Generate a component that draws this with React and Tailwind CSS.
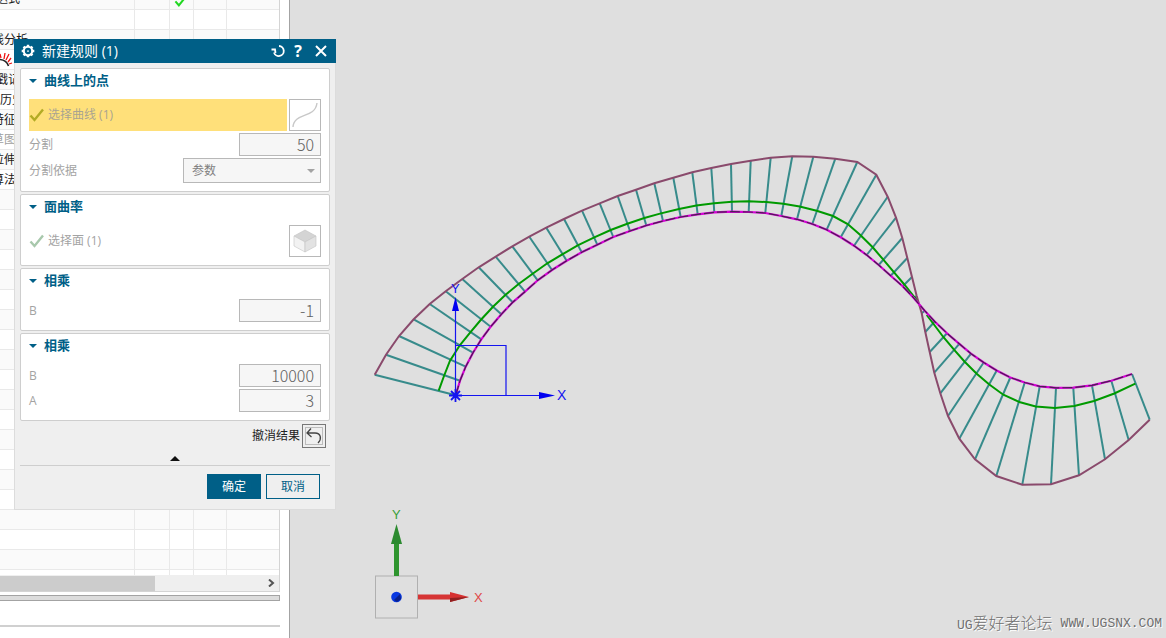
import React, { useState } from 'react';

// each rib: [x on curve, y on curve, x on comb edge, y on comb edge]
const RIBS = [
  [455.7, 395.3, 374.7, 374.7], [460, 380.7, 386, 354.7], [465.7, 366.7, 399, 336], [473, 352.7, 413.7, 319.3],
  [481.3, 339.3, 429.7, 304], [490.7, 326.7, 445.7, 291.3], [501.3, 314.3, 462.3, 279], [512.7, 302.3, 478.7, 267.3],
  [525, 291.7, 495.7, 256.7], [537.7, 280.3, 512.3, 246.3], [552, 270, 529.3, 236.7], [566.7, 260.7, 546.3, 227.7],
  [581.7, 252.3, 564, 219], [597.3, 244.7, 582, 210.7], [613.3, 237, 599.7, 203.3], [630, 231, 617.7, 196],
  [646.3, 225.5, 636, 189.7], [663, 221, 654.3, 183.3], [680.7, 217, 673.3, 177.7], [697.7, 214.3, 692.3, 172.3],
  [714.3, 212.3, 711.3, 168], [732, 211.7, 731, 164], [748.7, 212, 750.7, 160.7], [765.3, 213, 770.7, 157.7],
  [781.3, 216, 792.3, 156.3], [797, 219.3, 813.3, 156.7], [812.3, 224, 835.3, 158.7], [826.7, 229.7, 857.3, 162],
  [840.7, 237.3, 876.3, 174.7], [854, 245.7, 887.7, 196.7], [866.7, 255, 896, 217.7], [878.7, 265, 902.3, 238],
  [890.7, 275.7, 907.3, 258], [902.7, 286.3, 912, 277], [914, 298.3, 916.7, 296], [924.7, 310.7, 921.7, 313.3],
  [934.7, 321.5, 925.3, 332], [947, 333.3, 929.7, 352], [959.3, 343.8, 934.3, 372.7], [971, 353.7, 940.3, 393.3],
  [983.7, 362.5, 948, 416], [996.7, 370.5, 959.3, 438.7], [1010.3, 377.5, 975, 459.3], [1024.7, 382.5, 996.3, 476],
  [1039.7, 386.3, 1022.3, 484.7], [1056, 387.8, 1051, 484.3], [1073.3, 387.7, 1079, 475.3], [1092, 385.3, 1105, 459.3],
  [1111.3, 380.7, 1128.7, 440], [1132, 374, 1149.7, 419.7],
];

const OFFSET_LEFT =
  '438.7,390.7 444,376 450,360.7 460,345 470.3,332.3 480.7,320 493,306.7 505.3,295 518.3,284.3 532.3,274 547.3,263.3 562.3,254.3 577.7,245.3 594.3,237.3 610.7,230 627.3,223.7 644.3,218 660,213.6 679,209 696.3,205.5 714.3,203.3 732,201.8 748.7,201.3 766.3,202 783.3,203.7 799.7,206.5 816.7,210.7 833,216 847.7,224 860.3,235 872.7,247.3 883.3,259.7 894.3,272.7 904.3,284.5 916.7,300';
const OFFSET_RIGHT =
  '926.7,315 934.7,325.5 943.3,337 954,349.7 964.7,361.7 976.7,373.7 989,384.3 1003.3,394.7 1019.3,402 1035.7,406.5 1055,408 1074.3,406 1094,401 1114.3,393.5 1135.3,383.7';

const TREE_ROWS = [
  { label: '达式', left: '-ml-1', checked: true },
  { label: '' },
  { label: '线分析', left: '-ml-2' },
  { label: '', comb: true },
  { label: '戳记', left: '-ml-1' },
  { label: '历史', left: '' },
  { label: '特征', left: '-ml-2' },
  { label: '草图', left: '-ml-2', muted: true },
  { label: '拉伸', left: '-ml-2' },
  { label: '算法', left: '-ml-2' },
  ...Array.from({ length: 20 }, () => ({ label: '' })),
];

function CheckIcon({ className }) {
  return (
    <svg viewBox="0 0 16 14" className={className} fill="none" stroke="currentColor" strokeWidth="2.4">
      <path d="M1.5 7.5 L5.5 12 L14 1.5" />
    </svg>
  );
}

function TreePanel() {
  return (
    <aside className="w-[290px] shrink-0 overflow-hidden border-r border-[#a3a3a3] bg-white text-xs text-[#1c1c1c]">
      <div className="w-[280px]">
        <div className="h-[575px] overflow-hidden border-r border-[#d4d4d4]">
          <table className="-mt-[11px] w-full table-fixed border-collapse">
            <colgroup>
              <col className="w-[134px]" />
              <col className="w-[35px]" />
              <col className="w-[24px]" />
              <col className="w-[33px]" />
              <col />
            </colgroup>
            <tbody>
              {TREE_ROWS.map((row, i) => (
                <tr key={i} className="h-5 border-b border-[#e9e9e9] odd:bg-[#fafafa]">
                  <td className="h-5 border-r border-[#e9e9e9] p-0 leading-[19px] whitespace-nowrap">
                    <span className={`block ${row.left || ''} ${row.muted ? 'text-[#a0a0a0]' : ''}`}>{row.label}</span>
                    {row.comb && (
                      <svg viewBox="0 0 14 16" className="block h-4 w-3.5" fill="none">
                        <path d="M0 8.5 Q6.5 9 8.5 15" stroke="#222" strokeWidth="1.6" />
                        <path d="M1 7 L0 3 M4 8 L5 2 M6 9 L9 3 M8 11 L11 7 M9 13 L12 12" stroke="#e11" strokeWidth="1.3" />
                      </svg>
                    )}
                  </td>
                  <td className="border-r border-[#e9e9e9] p-0" />
                  <td className="border-r border-[#e9e9e9] p-0">
                    {row.checked && <CheckIcon className="mx-auto mt-1 h-3 w-3.5 text-[#22d822]" />}
                  </td>
                  <td className="border-r border-[#e9e9e9] p-0" />
                  <td className="p-0" />
                </tr>
              ))}
            </tbody>
          </table>
        </div>
        <div className="flex h-[17px] items-center justify-between border-r border-b border-[#d4d4d4] bg-[#efefef]">
          <div className="h-[15px] w-[155px] bg-[#cccccc]" />
          <svg viewBox="0 0 8 8" className="mr-1 h-2 w-2" fill="none" stroke="#555" strokeWidth="2">
            <path d="M2 0.5 L6 4 L2 7.5" />
          </svg>
        </div>
        <div className="mt-[3px] h-1.5 border border-l-0 border-[#a3a3a3] bg-[#dcdcdc]" />
        <div className="mt-6 h-0.5 bg-[#d0d0d0]" />
      </div>
    </aside>
  );
}

function Viewport() {
  const curve = RIBS.map(([x, y]) => `${x},${y}`).join(' ');
  const comb = RIBS.map(([, , x, y]) => `${x},${y}`).join(' ');

  return (
    <main className="relative min-w-0 flex-1 overflow-hidden bg-[#dfdfdf]">
      <svg width="876" height="638" viewBox="290 0 876 638" className="block max-w-none font-['Liberation_Sans',sans-serif]" fill="none">
        {RIBS.map(([x1, y1, x2, y2], i) => (
          <line key={i} x1={x1} y1={y1} x2={x2} y2={y2} stroke="#378b8b" strokeWidth="2" />
        ))}
        <polyline points={comb} stroke="#8a4a6c" strokeWidth="2" />
        <polyline points={OFFSET_LEFT} stroke="#009a00" strokeWidth="2" />
        <polyline points={OFFSET_RIGHT} stroke="#009a00" strokeWidth="2" />
        <polyline points={curve} stroke="#d800d8" strokeWidth="2.2" />
        <polyline points={curve} stroke="#4a2050" strokeWidth="1.2" strokeDasharray="10 3" />

        {/* sketch coordinate system */}
        <g stroke="#1414f0">
          <path d="M455.5 395.5 V310 M455.5 395.5 H540 M455.5 345.5 H506 V395.5" strokeWidth="1.2" />
          <path d="M455.5 389 V402 M449 395.5 H462 M451 391 L460 400 M460 391 L451 400" strokeWidth="1.8" />
        </g>
        <path d="M455.5 297 L459 311 H452 Z M555 395.5 L539 392 V399 Z" fill="#0000f0" />
        <text x="451" y="293" fontSize="13" fill="#1414f0">Y</text>
        <text x="557" y="400" fontSize="14" fill="#1414f0">X</text>

        {/* view triad */}
        <rect x="375.5" y="576" width="42" height="42" stroke="#b0b0b0" />
        <rect x="394" y="543" width="5" height="33" fill="#2f952f" />
        <path d="M396.5 524 L402 544 H391 Z" fill="#2b8a2f" />
        <rect x="418" y="594.5" width="33" height="5" fill="#d63535" />
        <path d="M469 597 L450 592 V602 Z" fill="#d63030" />
        <path d="M469 597 L450 598 V602 Z" fill="#8f2020" />
        <circle cx="396.5" cy="597" r="5.3" fill="#0838e0" />
        <path d="M400 594 L401 599 L397 602 L394 600 Z" fill="#0a208a" />
        <text x="392" y="519" fontSize="13" fill="#3aa03a">Y</text>
        <text x="474" y="602" fontSize="13" fill="#e04848">X</text>
      </svg>
      <div className="absolute right-1 bottom-0 flex items-center gap-2 text-base leading-6 text-[#707070] [text-shadow:1px_1px_0_#fff]">
        <span className="font-['Noto_Sans_CJK_SC',sans-serif] font-light">
          <span className="font-['Liberation_Mono',monospace] text-[13px]">UG</span>爱好者论坛
        </span>
        <span className="font-['Liberation_Mono',monospace] text-[13px]">WWW.UGSNX.COM</span>
      </div>
    </main>
  );
}

function Section({ title, children }) {
  const [open, setOpen] = useState(true);
  return (
    <section className="rounded-[2px] border border-[#cecece] bg-white px-2 pb-2">
      <h2>
        <button
          type="button"
          aria-expanded={open}
          onClick={() => setOpen(!open)}
          className="flex h-[30px] items-center gap-[7px] pb-1.5 text-[13px] font-bold text-[#005f87]"
        >
          <svg viewBox="0 0 8 4" className="h-1 w-2" fill="currentColor"><path d="M0 0 H8 L4 4 Z" /></svg>
          {title}
        </button>
      </h2>
      {open && <div className="flex flex-col gap-0.5">{children}</div>}
    </section>
  );
}

function NumberField({ id, label, initial }) {
  const [value, setValue] = useState(initial);
  return (
    <div className="flex h-[23px] items-center justify-between text-[#a3a3a3]">
      <label htmlFor={id}>{label}</label>
      <input
        id={id}
        value={value}
        onChange={(e) => setValue(e.target.value)}
        className="h-[23px] w-[82px] border border-[#b8b8b8] bg-[#f6f6f6] px-1.5 pb-0.5 text-right font-['Noto_Sans_CJK_SC',sans-serif] text-base font-light text-[#606060]"
      />
    </div>
  );
}

function RuleDialog() {
  return (
    <div
      role="dialog"
      aria-labelledby="rule-title"
      className="absolute top-[39px] left-[14px] w-[322px] border border-t-0 border-[#dcdcdc] bg-[#efefef] text-xs"
    >
      <header className="-mx-px flex h-6 items-center bg-[#005f87] pr-[9px] pl-[7px] text-white">
        <svg viewBox="0 0 16 16" className="h-3.5 w-3.5" fill="none" stroke="currentColor">
          <circle cx="8" cy="8" r="4.8" strokeWidth="2.4" />
          <circle cx="8" cy="8" r="1" fill="currentColor" stroke="none" />
          <path d="M8 0.8 V3 M8 13 V15.2 M0.8 8 H3 M13 8 H15.2 M2.9 2.9 L4.5 4.5 M11.5 11.5 L13.1 13.1 M2.9 13.1 L4.5 11.5 M11.5 4.5 L13.1 2.9" strokeWidth="2.8" />
        </svg>
        <h1 id="rule-title" className="ml-[7px] flex-1 text-sm">新建规则 (1)</h1>
        <div className="flex items-center gap-2">
          <button type="button" aria-label="重置">
            <svg viewBox="0 0 14 14" className="block h-3.5 w-3.5" fill="none" stroke="currentColor" strokeWidth="1.8">
              <path d="M8 2 A5 5 0 1 1 3 8.5 M0.5 5.5 L4 5.5 L4.5 9" />
            </svg>
          </button>
          <button type="button" aria-label="帮助" className="w-2.5 text-base leading-6 font-bold">?</button>
          <button type="button" aria-label="关闭" className="ml-1">
            <svg viewBox="0 0 12 12" className="block h-3 w-3" fill="none" stroke="currentColor" strokeWidth="2">
              <path d="M1 1 L11 11 M11 1 L1 11" />
            </svg>
          </button>
        </div>
      </header>

      <div className="flex flex-col gap-0.5 px-[5px] pt-[5px]">
        <Section title="曲线上的点">
          <div className="flex gap-0.5">
            <button type="button" className="flex h-8 flex-1 items-center gap-[3px] bg-[#ffe07a] text-[#a9a491]">
              <CheckIcon className="h-3.5 w-4 text-[#b3ab25]" />
              选择曲线 (1)
            </button>
            <button type="button" aria-label="曲线" className="h-8 w-8 border border-[#b8b8b8] bg-white">
              <svg viewBox="0 0 30 30" className="block" fill="none" stroke="#c8c8c8" strokeWidth="1.4">
                <path d="M3 27 C4 12 25 19 27 3" />
              </svg>
            </button>
          </div>
          <NumberField id="split" label="分割" initial="50" />
          <div className="flex h-[25px] items-center justify-between text-[#a3a3a3]">
            <label htmlFor="split-by">分割依据</label>
            <div className="relative">
              <select id="split-by" className="block h-[25px] w-[138px] appearance-none border border-[#b8b8b8] bg-[#f6f6f6] px-2 text-[#808080]">
                <option>参数</option>
              </select>
              <svg viewBox="0 0 8 4" className="pointer-events-none absolute top-[11px] right-1.5 h-1 w-2" fill="#a3a3a3"><path d="M0 0 H8 L4 4 Z" /></svg>
            </div>
          </div>
        </Section>

        <Section title="面曲率">
          <div className="flex justify-between">
            <button type="button" className="flex h-8 items-center gap-[3px] text-[#a3a3a3]">
              <CheckIcon className="h-3.5 w-4 text-[#a8c8ac]" />
              选择面 (1)
            </button>
            <button type="button" aria-label="面" className="h-8 w-8 border border-[#b8b8b8] bg-white">
              <svg viewBox="0 0 30 30" className="block" stroke="#c4c4c4" strokeWidth="0.6">
                <path d="M4 10 L15 4 L26 10 L15 16 Z" fill="#d4d4d4" />
                <path d="M4 10 L15 16 V26 L4 20 Z" fill="#f2f2f2" />
                <path d="M26 10 L15 16 V26 L26 20 Z" fill="#e2e2e2" />
              </svg>
            </button>
          </div>
        </Section>

        <Section title="相乘">
          <NumberField id="mul1-b" label="B" initial="-1" />
        </Section>

        <Section title="相乘">
          <NumberField id="mul2-b" label="B" initial="10000" />
          <NumberField id="mul2-a" label="A" initial="3" />
        </Section>
      </div>

      <div className="mt-[3px] mr-[9px] flex items-center justify-end gap-0.5 text-[#222]">
        <span id="undo-label">撤消结果</span>
        <button type="button" aria-labelledby="undo-label" className="h-6 w-6 border border-[#777] p-0.5">
          <svg viewBox="0 0 18 18" className="block" fill="none">
            <rect x="0.5" y="0.5" width="17" height="17" stroke="#888" strokeDasharray="1 1" />
            <path d="M6 1.5 L2 6 L6.5 10 M2 6 H10 C16 6 17 12 13 16" stroke="#444" strokeWidth="1.3" />
          </svg>
        </button>
      </div>

      <div className="mx-[5px] flex h-[18px] items-end justify-center border-b border-[#cecece] pb-1">
        <button type="button" aria-label="收起">
          <svg viewBox="0 0 10 5" className="block h-[5px] w-2.5" fill="#111"><path d="M0 5 H10 L5 0 Z" /></svg>
        </button>
      </div>

      <footer className="flex justify-end gap-[5px] pt-2 pr-[15px] pb-2.5">
        <button type="button" className="h-[25px] w-[54px] bg-[#005f87] text-white">确定</button>
        <button type="button" className="h-[25px] w-[54px] border border-[#005f87] text-[#005f87]">取消</button>
      </footer>
    </div>
  );
}

export default function App() {
  return (
    <div className="relative flex h-screen overflow-hidden bg-[#dfdfdf] font-['Open_Sans','Noto_Sans_CJK_SC',sans-serif]">
      <TreePanel />
      <Viewport />
      <RuleDialog />
    </div>
  );
}
